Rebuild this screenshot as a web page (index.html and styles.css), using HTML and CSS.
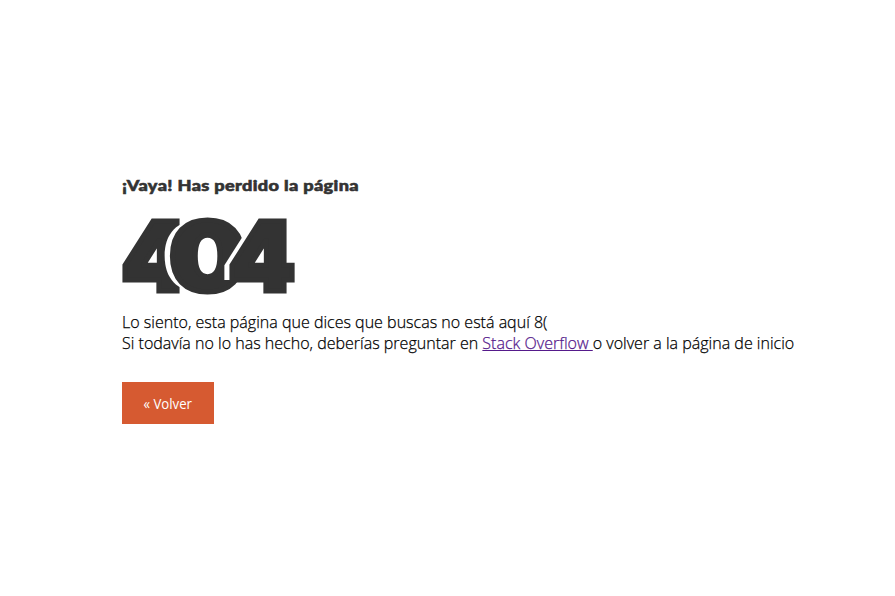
FILE: index.html
```html
<!DOCTYPE html>
<html lang="es">
<head>
<meta charset="utf-8">
<title>404</title>
<link rel="stylesheet" href="styles.css">
</head>
<body>
<main class="page">
<h2 class="subtitle">¡Vaya! Has perdido la página</h2>
<h1 class="code"><span class="digit">4</span><span class="digit zero">0</span><span class="digit last">4</span></h1>
<p class="message">Lo siento, esta página que dices que buscas no está aquí 8(<br>Si todavía no lo has hecho, deberías preguntar en <a class="link" href="#">Stack Overflow </a>o volver a la página de inicio</p>
<a class="button" href="#"><span class="label">« Volver</span></a>
</main>
</body>
</html>
```

FILE: styles.css
```css
* { box-sizing: border-box; }
body { margin: 0; background: #fff; color: #000; font-family: "Open Sans", sans-serif; }
.page { padding: 174px 0 0 122px; }
.subtitle { width: max-content; margin: 0; height: 24px; font: 900 15.5px/23px Lato, sans-serif; color: #333; white-space: nowrap; letter-spacing: .3px; -webkit-text-stroke: .6px #333; transform: scaleX(1.17); transform-origin: left; }
.code { display: flex; margin: 0 0 0 -1px; height: 113px; font: 900 96px/117px Inter, sans-serif; color: #333; }
.digit { position: relative; width: 66px; -webkit-text-stroke: 5px #333; }
.zero { margin-left: -18px; width: 71px; text-shadow: -7px 0 0 #fff; transform: scaleX(1.13); transform-origin: left; }
.last { margin-left: -12px; text-shadow: -7.5px 0 0 #fff; }
.message { width: max-content; margin: 0; font-size: 17px; font-weight: 300; line-height: 21px; white-space: nowrap; -webkit-text-stroke: .25px currentColor; transform: scaleX(.943); transform-origin: left; }
.link { color: #551a8b; }
.button { display: flex; width: 92px; height: 42px; margin-top: 29px; align-items: center; justify-content: center; background: #d65a31; color: #fff; font-size: 14px; font-weight: 500; text-decoration: none; }
.label { transform: scaleX(.94); }
```
